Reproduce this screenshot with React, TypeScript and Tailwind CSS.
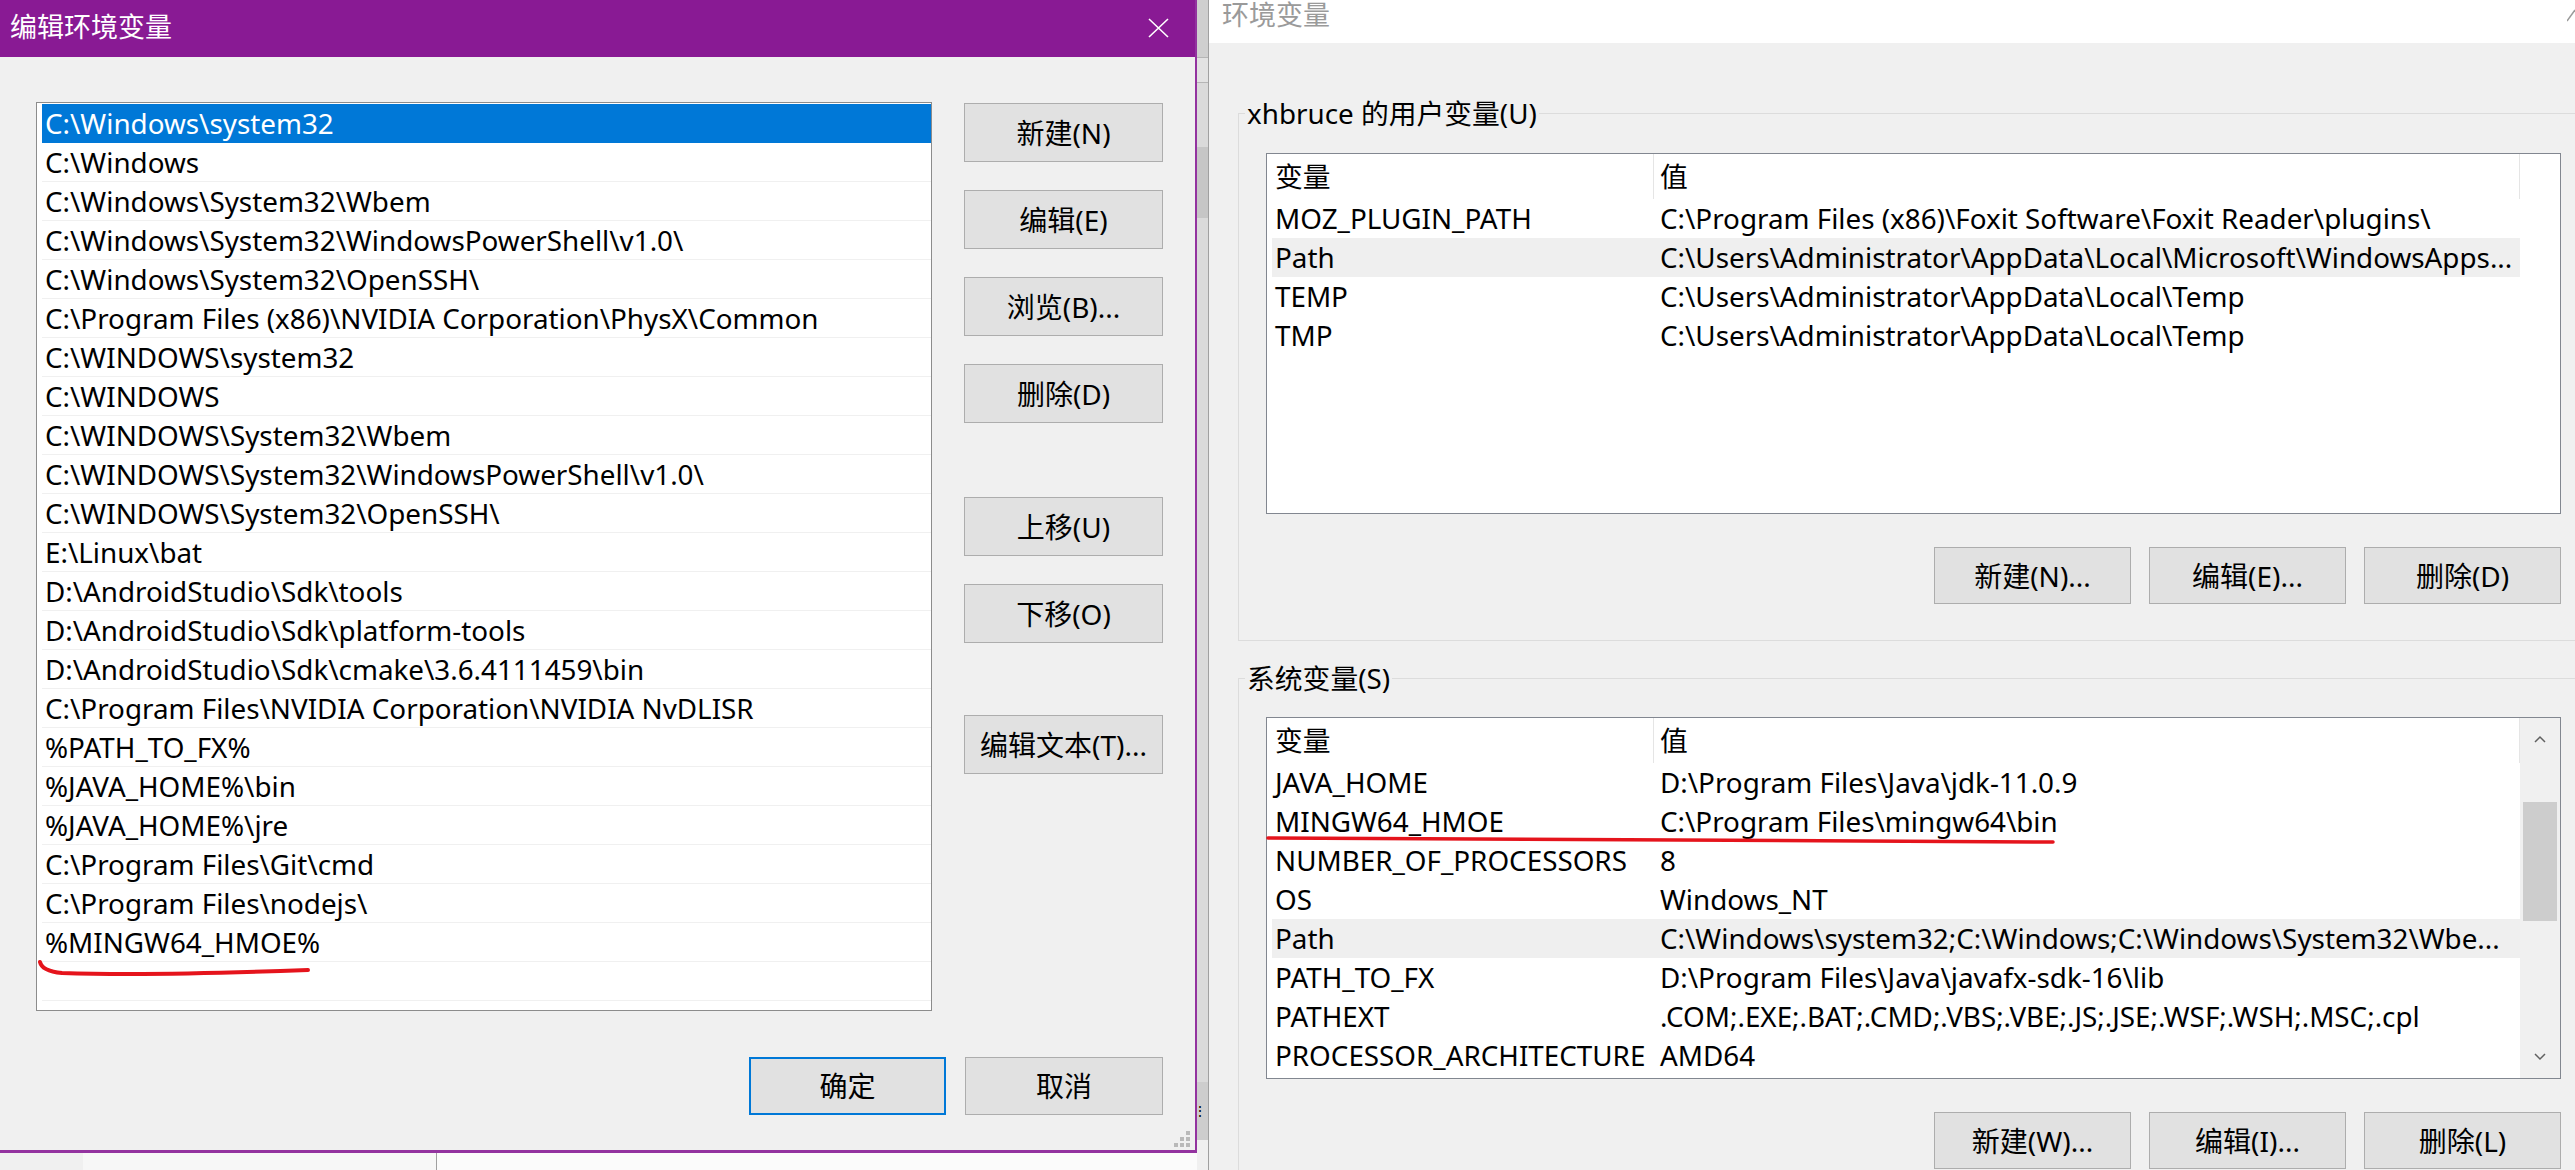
import React from "react";

const pathItems = String.raw`C:\Windows\system32
C:\Windows
C:\Windows\System32\Wbem
C:\Windows\System32\WindowsPowerShell\v1.0\
C:\Windows\System32\OpenSSH\
C:\Program Files (x86)\NVIDIA Corporation\PhysX\Common
C:\WINDOWS\system32
C:\WINDOWS
C:\WINDOWS\System32\Wbem
C:\WINDOWS\System32\WindowsPowerShell\v1.0\
C:\WINDOWS\System32\OpenSSH\
E:\Linux\bat
D:\AndroidStudio\Sdk\tools
D:\AndroidStudio\Sdk\platform-tools
D:\AndroidStudio\Sdk\cmake\3.6.4111459\bin
C:\Program Files\NVIDIA Corporation\NVIDIA NvDLISR
%PATH_TO_FX%
%JAVA_HOME%\bin
%JAVA_HOME%\jre
C:\Program Files\Git\cmd
C:\Program Files\nodejs\
%MINGW64_HMOE%`.split("\n");

type EnvRow = { name: string; value: string; hl?: boolean };

const userVars: EnvRow[] = [
  { name: "MOZ_PLUGIN_PATH", value: String.raw`C:\Program Files (x86)\Foxit Software\Foxit Reader\plugins\ ` },
  { name: "Path", value: String.raw`C:\Users\Administrator\AppData\Local\Microsoft\WindowsApps...`, hl: true },
  { name: "TEMP", value: String.raw`C:\Users\Administrator\AppData\Local\Temp` },
  { name: "TMP", value: String.raw`C:\Users\Administrator\AppData\Local\Temp` },
];

const sysVars: EnvRow[] = [
  { name: "JAVA_HOME", value: String.raw`D:\Program Files\Java\jdk-11.0.9` },
  { name: "MINGW64_HMOE", value: String.raw`C:\Program Files\mingw64\bin` },
  { name: "NUMBER_OF_PROCESSORS", value: "8" },
  { name: "OS", value: "Windows_NT" },
  { name: "Path", value: String.raw`C:\Windows\system32;C:\Windows;C:\Windows\System32\Wbe...`, hl: true },
  { name: "PATH_TO_FX", value: String.raw`D:\Program Files\Java\javafx-sdk-16\lib` },
  { name: "PATHEXT", value: ".COM;.EXE;.BAT;.CMD;.VBS;.VBE;.JS;.JSE;.WSF;.WSH;.MSC;.cpl" },
  { name: "PROCESSOR_ARCHITECTURE", value: "AMD64" },
];

const DialogButton = ({ label, className = "" }: { label: string; className?: string }) => (
  <div
    className={`flex h-[59px] w-[199px] items-center justify-center border border-[#adadad] bg-[#e1e1e1] text-[28px] text-black ${className}`}
  >
    {label}
  </div>
);

const WinButton = ({ label }: { label: string }) => (
  <div className="flex h-[57px] w-[197px] items-center justify-center border border-[#adadad] bg-[#e1e1e1] text-[28px] text-black">
    {label}
  </div>
);

const Chevron = ({ up }: { up?: boolean }) => (
  <svg width="12" height="8" viewBox="0 0 12 8">
    <path d={up ? "M1 7 L6 2 L11 7" : "M1 1 L6 6 L11 1"} fill="none" stroke="#606060" strokeWidth="1.5" />
  </svg>
);

const VarTable = ({ rows, height, scroll }: { rows: EnvRow[]; height: string; scroll?: boolean }) => (
  <div className={`ml-[27px] flex w-[1295px] overflow-hidden border border-[#828790] bg-white pl-[5px] ${height}`}>
    <div className="flex w-[1248px] shrink-0 flex-col">
      <div className="flex h-[45px] shrink-0 leading-[45px]">
        <div className="w-[382px] border-r border-[#e5e5e5] pl-[3px]">变量</div>
        <div className="w-[866px] border-r border-[#e5e5e5] pl-[6px]">值</div>
      </div>
      {rows.map((r) => (
        <div key={r.name} className={`flex h-[39px] shrink-0 leading-[39px] whitespace-nowrap ${r.hl ? "bg-[#efefef]" : ""}`}>
          <div className="w-[382px] overflow-hidden pl-[3px]">{r.name}</div>
          <div className="w-[866px] overflow-hidden pl-[6px]">{r.value}</div>
        </div>
      ))}
    </div>
    {scroll && (
      <div className="flex w-[40px] shrink-0 flex-col bg-[#f0f0f0]">
        <div className="flex h-[42px] items-center justify-center">
          <Chevron up />
        </div>
        <div className="mx-[3px] mt-[42px] h-[119px] bg-[#cdcdcd]" />
        <div className="flex-1" />
        <div className="flex h-[42px] items-center justify-center">
          <Chevron />
        </div>
      </div>
    )}
  </div>
);

const GroupBox = ({ title, children, className = "" }: { title: string; children: React.ReactNode; className?: string }) => (
  <div className={`flex flex-col border border-r-0 border-[#dcdcdc] ${className}`}>
    <div className="-mt-[17px] ml-[6px] w-fit bg-[#f0f0f0] px-[2px] leading-[32px]">{title}</div>
    {children}
  </div>
);

export default function App() {
  return (
    <div className="relative flex h-[1170px] w-[2575px] overflow-hidden bg-[#f0f0f0] font-['Noto_Sans','Noto_Sans_CJK_SC',sans-serif] text-[27.8px] text-black">
      {/* 编辑环境变量 dialog */}
      <div className="flex w-[1197px] shrink-0 flex-col">
        <div className="relative flex h-[1153px] shrink-0 flex-col border-r-2 border-b-[3px] border-[#93339f] bg-[#f0f0f0]">
          <div className="flex h-[57px] shrink-0 items-center justify-between bg-[#891a94] pb-[2px] pl-[10px] pr-[26px]">
            <span className="text-[27px] text-white">编辑环境变量</span>
            <svg width="21" height="20" viewBox="0 0 21 20">
              <path d="M1 1 L20 19 M20 1 L1 19" stroke="white" strokeWidth="1.6" />
            </svg>
          </div>
          <div className="flex gap-[32px] pl-[36px] pt-[45px]">
            <div className="flex h-[909px] w-[896px] shrink-0 flex-col overflow-hidden border border-[#8c8c8c] bg-white pl-[5px] pt-[1px]">
              {[...pathItems, ""].map((p, i) => (
                <div
                  key={i}
                  className={`h-[39px] shrink-0 whitespace-nowrap border-b pl-[3px] leading-[38px] ${
                    i === 0 ? "border-[#0078d7] bg-[#0078d7] text-white" : "border-[#f0f0f0]"
                  }`}
                >
                  {p}
                </div>
              ))}
            </div>
            <div className="flex flex-col gap-[28px] pt-[1px]">
              <DialogButton label="新建(N)" />
              <DialogButton label="编辑(E)" />
              <DialogButton label="浏览(B)..." />
              <DialogButton label="删除(D)" />
              <DialogButton label="上移(U)" className="mt-[46px]" />
              <DialogButton label="下移(O)" />
              <DialogButton label="编辑文本(T)..." className="mt-[44px]" />
            </div>
          </div>
          <div className="mt-[46px] flex justify-end gap-[19px] pr-[32px] text-[28px]">
            <div className="flex h-[58px] w-[197px] items-center justify-center border-2 border-[#0078d7] bg-[#e1e1e1]">确定</div>
            <div className="flex h-[58px] w-[198px] items-center justify-center border border-[#adadad] bg-[#e1e1e1]">取消</div>
          </div>
          {/* size grip */}
          <div className="absolute bottom-[3px] right-[5px] grid grid-cols-3 gap-[2px]">
            <span className="h-[4px] w-[4px]" />
            <span className="h-[4px] w-[4px]" />
            <span className="h-[4px] w-[4px] bg-[#b9b9b9]" />
            <span className="h-[4px] w-[4px]" />
            <span className="h-[4px] w-[4px] bg-[#b9b9b9]" />
            <span className="h-[4px] w-[4px] bg-[#b9b9b9]" />
            <span className="h-[4px] w-[4px] bg-[#b9b9b9]" />
            <span className="h-[4px] w-[4px] bg-[#b9b9b9]" />
            <span className="h-[4px] w-[4px] bg-[#b9b9b9]" />
          </div>
        </div>
        <div className="flex flex-1">
          <div className="w-[83px] bg-[#f0f0f0]" />
          <div className="w-[354px] border-r border-[#a0a0a0] bg-[#f7f7f7]" />
          <div className="flex-1 bg-[#fbfbfb]" />
        </div>
      </div>

      {/* window behind */}
      <div className="flex w-[12px] shrink-0 flex-col border-r border-[#a0a0a0] bg-[#dadada]">
        <div className="h-[57px] bg-[#cfcfcf]" />
        <div className="h-[26px] border-y border-[#b5b5b5] bg-[#e2e2e2]" />
        <div className="h-[64px]" />
        <div className="h-[71px] bg-[#c6c6c6]" />
        <div className="flex-1" />
        <div className="flex h-[58px] items-center justify-end bg-[#cdcdcd] pr-[1px] text-[14px] leading-none">⋮</div>
        <div className="h-[30px] bg-[#f0f0f0]" />
      </div>

      {/* 环境变量 window */}
      <div className="flex flex-1 flex-col">
        <div className="relative h-[43px] shrink-0 bg-white pl-[13px] pt-[4px]">
          <span className="block text-[27px] leading-[22px] text-[#9a9a9a]">环境变量</span>
          <svg className="absolute right-0 top-[4px]" width="8" height="18" viewBox="0 0 8 18">
            <path d="M0 17 L8 6" stroke="#9a9a9a" strokeWidth="1.5" />
          </svg>
        </div>
        <div className="flex flex-col pl-[29px]">
          <GroupBox title="xhbruce 的用户变量(U)" className="mt-[70px] h-[528px]">
            <div className="mt-[24px]">
              <VarTable rows={userVars} height="h-[361px]" />
            </div>
            <div className="mt-[33px] flex justify-end gap-[18px] pr-[14px]">
              <WinButton label="新建(N)..." />
              <WinButton label="编辑(E)..." />
              <WinButton label="删除(D)" />
            </div>
          </GroupBox>
          <GroupBox title="系统变量(S)" className="mt-[37px] h-[600px]">
            <div className="mt-[23px]">
              <VarTable rows={sysVars} height="h-[362px]" scroll />
            </div>
            <div className="mt-[33px] flex justify-end gap-[18px] pr-[14px]">
              <WinButton label="新建(W)..." />
              <WinButton label="编辑(I)..." />
              <WinButton label="删除(L)" />
            </div>
          </GroupBox>
        </div>
      </div>

      {/* red hand-drawn underlines */}
      <svg className="pointer-events-none absolute left-0 top-0" width="2575" height="1170" viewBox="0 0 2575 1170">
        <path d="M40 962 Q42 971 62 973 Q150 976 308 970" fill="none" stroke="#e5141c" strokeWidth="4" strokeLinecap="round" />
        <path d="M1268 838 Q1650 841 2053 842" fill="none" stroke="#e5141c" strokeWidth="3.5" strokeLinecap="round" />
      </svg>
    </div>
  );
}
